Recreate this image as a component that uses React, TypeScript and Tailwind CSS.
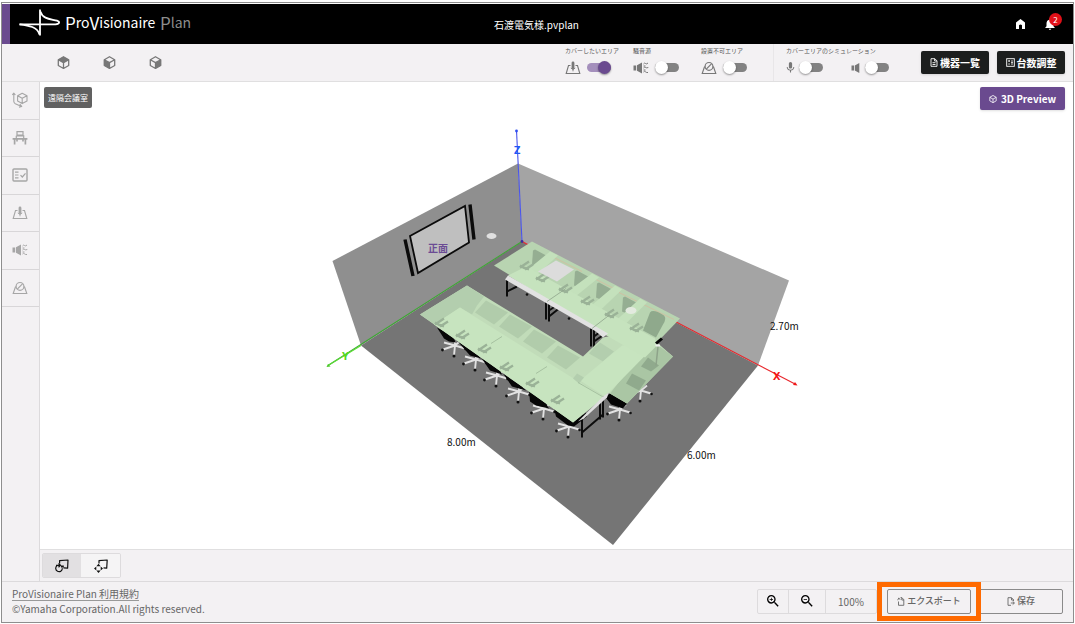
import type { ReactNode } from "react";
import { MdMic, MdNotifications, MdZoomIn, MdZoomOut } from "react-icons/md";

type Face = "top" | "left" | "right";

const FACES: Record<Face, string> = {
  top: "M7 .8 13 4 7 7.2 1 4Z",
  left: "M1 4 7 7.2V13.4L1 10.2Z",
  right: "M13 4 7 7.2V13.4L13 10.2Z",
};

const CubeIcon = ({ face, size = 14 }: { face?: Face; size?: number }) => (
  <svg width={size} height={size} viewBox="0 0 14 14" fill="none" stroke="currentColor" strokeWidth="1.4" strokeLinejoin="round">
    <path d="M7 .8 12.6 4V10.2L7 13.4 1.4 10.2V4ZM1.4 4 7 7.2 12.6 4M7 7.2V13.4" />
    {face && <path d={FACES[face]} fill="currentColor" stroke="none" />}
  </svg>
);

const RotateCubeIcon = () => (
  <svg width="16" height="16" viewBox="0 0 16 16" fill="none" stroke="currentColor" strokeLinejoin="round" strokeWidth="1.1">
    <path d="M10.2 1.2 15 3.7V9L10.2 11.6 5.6 9V3.7ZM5.6 3.7 10.2 6.3 15 3.7M10.2 6.3V11.6" />
    <path d="M1.8 1.5V9.5Q2 11 3.3 11.7L9 14.2M.3 3 1.8 1.2 3.4 3M7.8 12.2 9.7 14.4 7 15.2" />
  </svg>
);

const DeskIcon = () => (
  <svg width="16" height="16" viewBox="0 0 16 16" fill="none" stroke="currentColor">
    <path d="M5 1.6H11V5H5ZM4.3 5.8H11.7V8.3M4.3 5.8V8.3" strokeWidth="1.2" />
    <path d="M.6 8.8H15.4M2.6 9V14.5M13.4 9V14.5M5 9.5V11.5M11 9.5V11.5" strokeWidth="1.7" />
  </svg>
);

const ChecklistIcon = () => (
  <svg width="16" height="16" viewBox="0 0 16 16" fill="none" stroke="currentColor">
    <rect x="1" y="2" width="14" height="12" rx="1" strokeWidth="1.4" />
    <path d="M3 5.2H6.5M3 8H6.5M3 10.8H6.5M8.5 8.2 10.3 10 13.5 6.3" strokeWidth="1.2" />
  </svg>
);

const CoverIcon = () => (
  <svg width="16" height="16" viewBox="0 0 16 16" fill="none" stroke="currentColor">
    <path d="M5.5 5.500H3.500L1.200 13.500H14.800L12.500 5.500H10.500" strokeWidth="1.100" />
    <path d="M8 3V7.800" strokeWidth="2.800" strokeLinecap="round" />
    <path d="M5.800 8Q8 11 10.200 8M8 9V11.300" strokeWidth=".9" />
  </svg>
);

const NoiseIcon = () => (
  <svg width="16" height="16" viewBox="0 0 16 16" fill="none" stroke="currentColor">
    <path d="M.5 5.5H3.2V10.5H.5ZM4 5.2 9 2.5V13.5L4 10.8Z" fill="currentColor" stroke="none" />
    <path d="M10.5 4Q11.500 2.5 12.500 3.500T15 3M10.500 8Q11.500 6.800 12.500 7.500T15.300 7.500M10.500 12Q11.500 10.800 12.500 11.800T15 12.500M10.500 6H12.500M10.500 10H12.500" strokeWidth="1" />
  </svg>
);

const BlockedIcon = () => (
  <svg width="16" height="16" viewBox="0 0 16 16" fill="none" stroke="currentColor">
    <path d="M3.600 6.500 1.200 13.500H14.800L12.400 6.500" strokeWidth="1.100" />
    <circle cx="8" cy="6.400" r="3.900" strokeWidth="1.200" />
    <path d="M5.300 9.100 10.700 3.700" strokeWidth="1.200" />
  </svg>
);

const SpeakerIcon = () => (
  <svg width="10" height="14" viewBox="0 0 10 14" fill="currentColor">
    <path d="M.5 4.5H3V9.5H.5ZM3.8 4.5 8.3 2V12L3.8 9.5Z" />
  </svg>
);

const FileIcon = ({ variant }: { variant: "list" | "export" | "save" }) => (
  <svg width="8" height="9" viewBox="0 0 8 9" fill="none" stroke="currentColor" strokeWidth=".9">
    {variant === "list" && <path d="M1 .7H4.8L7 2.9V8.3H1ZM4.6.8V3H7M2.5 4.7H5.5M2.5 6.5H5.5" />}
    {variant === "export" && <path d="M3.500.7H5L6.800 2.700V8.300H1.500V4.500M4.800.8V3H6.800M.7 3.200 1.800.9 3.200 2.800" />}
    {variant === "save" && <path d="M4 8.3H1V.7H4.5L6.5 2.7V4M4.5.8V3H6.5M3.8 6H7.3M5.7 4.4 7.4 6 5.7 7.6" />}
  </svg>
);

const CountIcon = () => (
  <svg width="9" height="9" viewBox="0 0 9 9" fill="none" stroke="currentColor" strokeWidth=".9">
    <rect x=".7" y=".7" width="7.6" height="7.6" />
    <path d="M2.2 3H4M2.2 6H4M5 3H7M5 6H7M3.1 2V4M5 4.5H7" strokeWidth=".8" />
  </svg>
);

const OrbitIcon = () => (
  <svg width="14" height="14" viewBox="0 0 14 14" fill="none" stroke="currentColor" strokeWidth="1.2">
    <path d="M4.6 4.5V1.6L13 1 12.6 9.2 8.5 8.8" strokeLinejoin="round" />
    <path d="M2.2 6.600A3.300 3.300 0 1 0 7.300 9.200M1 6.300H5.500M3.500 4.500 5.500 6.300 3.500 8.200" />
    <path d="M6 6.500H8.800V8.500H6Z" fill="currentColor" stroke="none" />
  </svg>
);

const PanIcon = () => (
  <svg width="14" height="14" viewBox="0 0 14 14" fill="none" stroke="currentColor" strokeWidth="1.2">
    <path d="M5 4.500V1.600L13.200 1 12.700 9.200 9.500 8.800" strokeLinejoin="round" />
    <path d="M4.500 4.800 6.600 7.300H2.400ZM4.500 14 6.600 11.600H2.400ZM0 9.500 2.300 7.400V11.600ZM9 9.500 6.700 7.400V11.600Z" fill="currentColor" stroke="none" />
  </svg>
);

const Logo = () => (
  <svg width="176" height="34" viewBox="16 6 176 34" fill="none" role="img" aria-label="ProVisionaire Plan">
    <g stroke="#fff" strokeWidth="1.8" strokeLinejoin="round">
      <path d="M19.500 23.300H55.500C60 22.800 60 20.800 57 19.700 51 18 43 18.500 40.300 10.500" />
      <path d="M40 8.500V34.500M19.500 23.300C29 24.500 37.500 26 39.500 33.500" />
    </g>
    <g fontFamily="'Noto Sans CJK JP', sans-serif" fontSize="14">
      <text x="65" y="29" fill="#fff">
        <tspan fontSize="17">P</tspan>
        <tspan dy="-2">ro</tspan>
        <tspan dy="2" fontSize="17">V</tspan>
        <tspan dy="-2">isionaire</tspan>
      </text>
      <text x="160" y="29" fill="#8d8d8d">
        <tspan fontSize="17">P</tspan>
        <tspan dy="-2">lan</tspan>
      </text>
    </g>
  </svg>
);

const Toggle = ({ label, defaultChecked = false }: { label: string; defaultChecked?: boolean }) => (
  <input
    type="checkbox"
    role="switch"
    aria-label={label}
    defaultChecked={defaultChecked}
    className="relative h-[9px] w-6 cursor-pointer appearance-none rounded-full bg-[#828282] before:absolute before:-top-0.5 before:left-0 before:size-[13px] before:rounded-full before:bg-white before:shadow-[0_1px_2px_rgba(0,0,0,0.4)] checked:bg-[#a48fbc] checked:before:left-[11px] checked:before:bg-[#6a4a8f]"
  />
);

interface ToggleGroupProps {
  label: string;
  icon: ReactNode;
  checked?: boolean;
}

const ToggleGroup = ({ label, icon, checked }: ToggleGroupProps) => (
  <div className="flex w-14 flex-col gap-1">
    <span className="text-[6px] leading-[10px] whitespace-nowrap text-[#555]">{label}</span>
    <div className="flex items-center gap-1.5 text-[#777]">
      {icon}
      <Toggle label={label} defaultChecked={checked} />
    </div>
  </div>
);

const Header = () => (
  <header className="mt-px flex h-10 shrink-0 items-center border-l-8 border-[#6a4a8f] bg-black text-white">
    <div className="flex flex-1 items-center pl-1.5">
      <Logo />
    </div>
    <h1 className="text-[10px]">石渡電気様.pvplan</h1>
    <div className="flex flex-1 items-center justify-end gap-[17px] pr-4">
      <button aria-label="ホーム">
        <svg width="11" height="12" viewBox="0 0 11 12" fill="#fff">
          <path d="M1 11V4.6L5.5 1 10 4.6V11H7V7.2Q5.5 5.6 4 7.2V11Z" />
        </svg>
      </button>
      <button aria-label="通知" className="relative">
        <MdNotifications size={14} />
        <span className="absolute -top-1 left-1.5 flex size-[13px] items-center justify-center rounded-full bg-[#e01018] text-[8px] leading-none">
          2
        </span>
      </button>
    </div>
  </header>
);

const Toolbar = () => (
  <div className="flex h-[38px] shrink-0 items-center border-b border-[#e0dfe0] bg-[#f3f1f3] pr-2">
    <div className="flex gap-[33px] pl-[55px] text-[#777]">
      <button aria-label="上面"><CubeIcon face="top" size={13} /></button>
      <button aria-label="左面"><CubeIcon face="left" size={13} /></button>
      <button aria-label="右面"><CubeIcon face="right" size={13} /></button>
    </div>
    <div className="ml-auto flex gap-3 pb-1">
      <ToggleGroup label="カバーしたいエリア" icon={<CoverIcon />} checked />
      <ToggleGroup label="騒音源" icon={<NoiseIcon />} />
      <ToggleGroup label="設置不可エリア" icon={<BlockedIcon />} />
    </div>
    <div className="ml-4 flex h-full flex-col justify-center gap-1 border-l border-[#e8e6e8] pb-1 pl-3">
      <span className="text-[6px] leading-[10px] text-[#555]">カバーエリアのシミュレーション</span>
      <div className="flex h-4 items-center text-[#777]">
        <MdMic size={13} className="mr-0.5 -ml-0.5" />
        <Toggle label="マイクのシミュレーション" />
        <span className="mr-1 ml-7"><SpeakerIcon /></span>
        <Toggle label="スピーカーのシミュレーション" />
      </div>
    </div>
    <div className="ml-8 flex gap-2 text-[10px] font-bold text-white">
      <button className="flex h-[23px] w-[68px] items-center justify-center gap-0.5 rounded-xs bg-[#1c1e1e] shadow">
        <FileIcon variant="list" />
        機器一覧
      </button>
      <button className="flex h-[23px] w-[68px] items-center justify-center gap-0.5 rounded-xs bg-[#1c1e1e] shadow">
        <CountIcon />
        台数調整
      </button>
    </div>
  </div>
);

const SIDE_ITEMS = [
  { label: "部屋", icon: <RotateCubeIcon /> },
  { label: "家具", icon: <DeskIcon /> },
  { label: "条件", icon: <ChecklistIcon /> },
  { label: "カバーエリア", icon: <CoverIcon /> },
  { label: "騒音源", icon: <NoiseIcon /> },
  { label: "設置不可エリア", icon: <BlockedIcon /> },
];

const Sidebar = () => (
  <nav className="w-[38px] shrink-0 border-r border-[#dcdadc] bg-[#f3f1f3]">
    <div className="grid h-[225px] grid-rows-6 text-[#a6a6a6]">
      {SIDE_ITEMS.map((item) => (
        <button
          key={item.label}
          aria-label={item.label}
          className="flex items-center justify-center border-b border-[#d8d6d8] pr-0.5"
        >
          {item.icon}
        </button>
      ))}
    </div>
  </nav>
);

const Chair = ({ x, y }: { x: number; y: number }) => (
  <g transform={`translate(${x} ${y})`}>
    <path d="M0 0-12 4M0 0-1 10M0 0 10 3M0 0-11-3M0 0 6-5M0 0V-4" stroke="#e2e2e2" strokeWidth="1.9" />
    <g fill="#111">
      <circle cx="-12.5" cy="4.5" r="1.4" />
      <circle cx="-1" cy="10.5" r="1.5" />
      <circle cx="10.5" cy="3.5" r="1.3" />
    </g>
  </g>
);

// Both armrests of one seat, seen through the coverage area
const Arms = ({ x, y }: { x: number; y: number }) => (
  <path
    transform={`translate(${x} ${y})`}
    d="M-6 3 3-3M-6 1-1 4M-1 5 7 0M-2 3 3 5"
    stroke="#9ab297"
    strokeWidth="2.3"
  />
);

const FRONT_CHAIRS = [[455, 346], [476, 360], [497, 376], [519, 392], [544, 409], [569, 427]];
const FRONT_ARMS = [[441, 322], [462, 334], [484, 348], [506, 366], [532, 382], [557, 399]];
const BACK_ARMS = [[526, 265], [542, 277], [565, 288], [587, 300], [611, 313], [636, 327]];
const BACK_SEATS = [[537, 259], [579, 280], [601, 292], [627, 306]];
const FRONT_PATCHES = [[486, 301], [510, 315], [534, 330], [558, 346]];

const RoomScene = () => (
  <svg
    className="size-full"
    viewBox="40 83 1033 466"
    fill="none"
    fontFamily="'Noto Sans CJK JP', sans-serif"
  >
    {/* Walls and floor */}
    <path d="M518 164 332.500 261.500 361 346 522 242Z" fill="#8f8f8f" />
    <path d="M518 164 789 281 758 366 522 242Z" fill="#a4a4a4" />
    <path d="M522 242 758 366 613 545.500 361 346Z" fill="#757575" />

    {/* Screen and its side speakers */}
    <path d="M410 236.500 465 206.500 469 243 418 273.500Z" fill="#bfbfbf" stroke="#0b0b0b" strokeWidth="1.8" />
    <path d="M405 240 413 276.500M470 205 474 240" stroke="#0b0b0b" strokeWidth="3.4" />
    <text x="428" y="252" fontSize="10" fontWeight="700" fill="#6b4b94">正面</text>
    <ellipse cx="491.500" cy="236.500" rx="5" ry="3" fill="#e0e0e0" />

    {/* Axes */}
    <g strokeWidth="1.1">
      <path d="M522 242 516.500 131" stroke="#4a55ec" />
      <path d="M522 242 328 366" stroke="#3da733" />
      <path d="M361 346 328 366" stroke="#5bdc35" />
      <path d="M522 242 796 385" stroke="#e8272c" />
    </g>
    <circle cx="516.500" cy="131.500" r="1.400" fill="#2e4df0" />
    <circle cx="522" cy="242" r="1.400" fill="#3d2ba0" />
    <path d="M326.500 367.500 328 364.500 330.500 367Z" fill="#4bc82a" />
    <path d="M797.500 386 793 385.500 795 382.500Z" fill="#f01818" />

    {/* Table legs */}
    <g stroke="#0c0c0c" strokeWidth="2">
      <path d="M507 279V297M507 292 517 287M546 302V320M549 303V322M549 317 559 309M549 311 558 305" />
      <path d="M591 329V347M594 330V348M594 342 604 335M594 337 602 331M582 405V438M582 433 603 415M600 402V420M603 396V418" />
    </g>
    <circle cx="527" cy="295" r="1.300" fill="#111" />
    <circle cx="569" cy="319" r="1.300" fill="#111" />

    {FRONT_CHAIRS.map(([x, y]) => (
      <Chair key={x} x={x} y={y} />
    ))}
    <Chair x={620} y={410} />
    <Chair x={641} y={391} />
    <path
      d="M437 328 452 336 456 343 449 342 444 339ZM457 341 478 355 481 359 470 356ZM481 358 500 370 502 375 490 371ZM503 374 522 387 526 391 512 387ZM529 391 546 404 549 409 536 406 530 402ZM554 409 575 421 586 413 587 417 574 427 568 426 556 417Z"
      fill="#060606"
    />
    <path d="M605 397 612 393 627 404 623 409 611 405Z" fill="#060606" />

    {/* Coverage area of the near tables */}
    <path d="M467 286 583 357 603 338 642 330 673 357 627 404 608 393 573 423 420 315Z" fill="#c1dcb9" />
    <path d="M467 286 484 297 477 306 472 315 460 308 435 325 420 315Z" fill="#b3ceae" />
    {FRONT_PATCHES.map(([x, y]) => (
      <path key={x} transform={`translate(${x} ${y})`} d="M0 0 22 12 8 24-11 12Z" fill="#b1ccab" />
    ))}
    <path d="M652 341 673 357 627 404 610 394Z" fill="#aac6a4" />
    <path d="M594 348 600 343 614 352 603 362 589 354Z" fill="#b3ceae" />
    <path d="M460 308 604 398 573 423 434 325Z" fill="#c7e4bf" />
    <path d="M622 346 656 345 605 397 580 381Z" fill="#c7e4bf" />
    <path d="M577 374 584 378 579 384 573 379Z" fill="#b3ceae" />
    <path d="M632 374 646 381 639 391 626 384ZM648 358 659 366 651 372 641 367Z" fill="#90aa8d" />
    <path d="M502 337 491 344M547 367 536 374M578 383 604 398" stroke="#9db898" strokeWidth=".8" />
    {FRONT_ARMS.map(([x, y]) => (
      <Arms key={x} x={x} y={y} />
    ))}

    {/* Coverage area of the far tables */}
    <path d="M532 242 680 319 657 343 645 352 603 332 494 266Z" fill="#b8d4b1" />
    <path d="M554 258 582 272M590 277 614 289M619 293 674 320" stroke="#cfc1a3" strokeWidth="1" />
    {BACK_SEATS.map(([x, y]) => (
      <path key={x} transform={`translate(${x} ${y})`} d="M-4-8-2-9 11-2 4 10-5 6Z" fill="#95ae92" />
    ))}
    <path d="M650 313Q653 309 664 316 667 319 663 325L656 338 643 331Z" fill="#8fa98c" />
    <path d="M550 252 558 256 536 276 528 270ZM592 274 599 278 573 299 565 294ZM615 286 622 290 598 313 589 308ZM640 299 647 303 623 327 615 322Z" fill="#c4e1bc" />
    <path d="M526 267 655 339 657 346 645 358 603 334 508 276Z" fill="#c6e3be" />
    {BACK_ARMS.map(([x, y]) => (
      <Arms key={x} x={x} y={y} />
    ))}
    <path d="M556 261 574 270 557 282 538 272Z" fill="#dcdcdc" />
    <path d="M505 280 508 276 608 334 603 338 596 332Z" fill="#e2e2e2" />
    <path d="M547 302 566 289M592 329 610 315" stroke="#8ea38a" strokeWidth=".8" />
    <ellipse cx="631" cy="311" rx="5.500" ry="3.500" fill="#e3eadf" />
    <path d="M603 397 609 393 607 398 584 419 578 422Z" fill="#dedede" />
    <path d="M658 347 656 366" stroke="#8ea38a" strokeWidth="1.500" />
    <path d="M655 343 661 338 663 340 657 345Z" fill="#060606" />
    <path d="M655 345H660V347H656Z" fill="#eee" />

    <g fontSize="10" fill="#111">
      <text x="447" y="446">8.00m</text>
      <text x="687" y="459">6.00m</text>
      <text x="770" y="330">2.70m</text>
    </g>
    <g fontSize="11" fontWeight="700" fontFamily="'Noto Sans', sans-serif">
      <text x="514" y="154" fill="#1f57f5">Z</text>
      <text x="342" y="360" fill="#55d820">Y</text>
      <text x="773" y="380" fill="#f51414">X</text>
    </g>
  </svg>
);

const Workspace = () => (
  <main className="flex min-w-0 flex-1 flex-col">
    <div className="relative min-h-0 flex-1 bg-white">
      <RoomScene />
      <div className="absolute top-[5px] left-1 flex h-[21px] items-center rounded-xs bg-[#616161] px-1 text-[8px] text-white">
        遠隔会議室
      </div>
      <button className="absolute top-[5px] right-2 flex h-[23px] w-[85px] items-center justify-center gap-1 rounded-xs bg-[#6a4a8f] text-[10px] font-bold text-white shadow">
        <CubeIcon size={8} />
        3D Preview
      </button>
    </div>
    <div className="flex h-8 shrink-0 items-center border-t border-[#e0dfe0] bg-[#f3f1f3] pl-0.5">
      <div className="flex h-[25px] overflow-hidden rounded-xs border border-[#dddbdd] text-[#111]">
        <button aria-label="回転" aria-pressed="true" className="flex w-[38px] items-center justify-center bg-[#e2e0e2]">
          <OrbitIcon />
        </button>
        <button aria-label="移動" className="flex w-[39px] items-center justify-center bg-[#f5f4f5]">
          <PanIcon />
        </button>
      </div>
    </div>
  </main>
);

const Footer = () => (
  <footer className="flex h-[41px] shrink-0 items-center border-t border-[#dcdadc] bg-[#f3f1f3] px-[10px] pb-0.5 text-[#666]">
    <div className="flex flex-col items-start text-[10px] leading-[15px]">
      <a href="#terms" className="border-b border-[#999] leading-[13px]">ProVisionaire Plan 利用規約</a>
      <span>©Yamaha Corporation.All rights reserved.</span>
    </div>
    <div className="ml-auto flex h-[25px] rounded-xs border border-[#dddbdd] text-[10px]">
      <button aria-label="拡大" className="flex w-[31px] items-center justify-center border-r border-[#dddbdd] text-black">
        <MdZoomIn size={16} />
      </button>
      <button aria-label="縮小" className="flex w-[37px] items-center justify-center border-r border-[#dddbdd] text-black">
        <MdZoomOut size={16} />
      </button>
      <span className="flex w-[50px] items-center justify-center">100%</span>
    </div>
    <div className="relative ml-[10px]">
      <button className="flex h-[25px] w-[84px] items-center justify-center gap-0.5 rounded-xs border border-[#8a8a8a] text-[9px] font-medium">
        <FileIcon variant="export" />
        エクスポート
      </button>
      <div className="pointer-events-none absolute -inset-x-[10px] -inset-y-[7px] z-10 border-[5px] border-[#ff6a00]" />
    </div>
    <button className="ml-2 flex h-[25px] w-[84px] items-center justify-center gap-0.5 rounded-xs border border-[#8a8a8a] text-[9px] font-medium">
      <FileIcon variant="save" />
      保存
    </button>
  </footer>
);

export default function App() {
  return (
    <div className="h-screen bg-white px-px pt-0.5 pb-px font-['Noto_Sans_CJK_JP',sans-serif]">
      <div className="flex h-full flex-col border border-[#8e8e8e]">
        <Header />
        <Toolbar />
        <div className="flex min-h-0 flex-1">
          <Sidebar />
          <Workspace />
        </div>
        <Footer />
      </div>
    </div>
  );
}
